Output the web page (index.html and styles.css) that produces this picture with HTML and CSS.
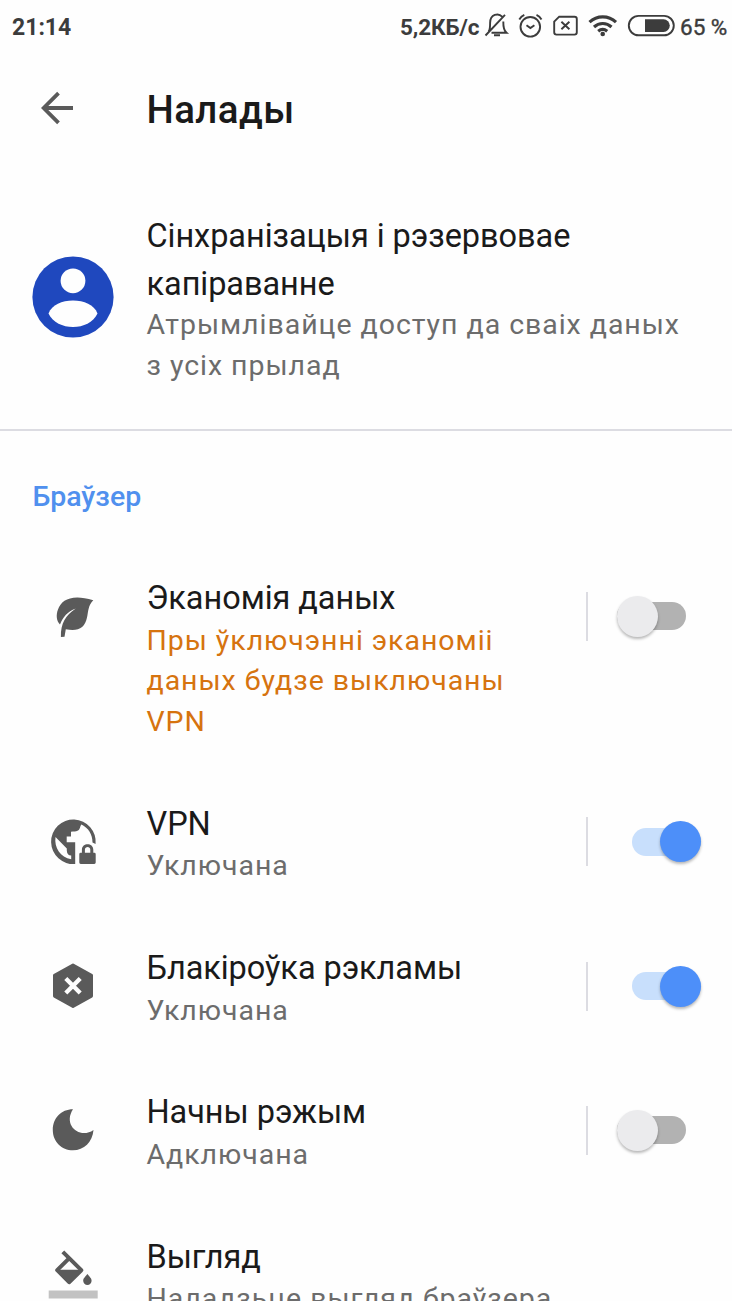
FILE: index.html
```html
<!DOCTYPE html>
<html lang="be">
<head>
<meta charset="utf-8">
<title>Налады</title>
<link rel="stylesheet" href="styles.css">
</head>
<body>
<div class="screen">
  <div class="status">
    <span class="clock">21:14</span>
    <span class="speed">5,2КБ/с</span>
    <svg class="tray" width="250" height="40" viewBox="482 6 250 40" fill="none" stroke="#3c3c3c" stroke-width="1.9">
      <path d="M485.500 35.500 505 14.800M488.500 31.500c1.700-1.700 1.600-4 1.600-8.500 0-9 8.500-10.300 12-6.300M503.300 21.500c-.1 6 .5 9 3.200 11.300H491.500M494 35.300h6"/>
      <circle cx="530.300" cy="26.800" r="9.800"/>
      <path d="M526.500 25.200l3.900 2.900 4-2.900M519.300 19.500c1.200-2.200 2.700-3.600 5-4.600M541.500 19.500c-1.200-2.200-2.700-3.600-5-4.600"/>
      <path d="M559.200 16.700h15.300q2.300 0 2.300 2.300v13.300q0 2.300-2.300 2.300h-18q-2.300 0-2.300-2.300V21.700zM561.400 21.700l8 7.600M569.400 21.700l-8 7.600"/>
      <g stroke-width="3.100"><path d="M589.500 22.200c7.500-7.100 19-7.100 26.500 0M594 27c5-4.600 12.500-4.600 17.500 0M598.200 31.300c2.700-2.300 6.300-2.300 9 0"/></g>
      <circle cx="602.700" cy="34" r="2.300" fill="#3c3c3c" stroke="none"/>
      <rect x="628.800" y="15.900" width="45" height="19.400" rx="9.700"/>
      <path d="M645 19.300h18.500a6.300 6.300 0 0 1 0 12.600H645z" fill="#3c3c3c" stroke="none"/>
    </svg>
    <span class="percent">65 %</span>
  </div>

  <header class="toolbar">
    <svg class="back" width="36" height="36" viewBox="0 0 36 36" fill="none" stroke="#5a5a5a" stroke-width="3.800"><path d="M34 18H4M19.500 3.200 4.700 18l14.800 14.800"/></svg>
    <h1 class="heading">Налады</h1>
  </header>

  <section class="account">
    <div class="lead">
      <svg width="82" height="82" viewBox="0 0 82 82"><circle cx="41" cy="41" r="40.600" fill="#1f48be"/><g fill="#fefefe"><circle cx="41" cy="24.800" r="12.400"/><path d="M16.500 57.500C20 48.500 30 44.500 41 44.500s21 4 24.500 13C61 66.500 51.500 71 41 71s-20-4.500-24.500-13.500z"/></g></svg>
    </div>
    <div class="text">
      <div class="title">Сінхранізацыя і рэзервовае<br>капіраванне</div>
      <div class="sub sub-account">Атрымлівайце доступ да сваіх даных<br>з усіх прылад</div>
    </div>
  </section>

  <h2 class="section">Браўзер</h2>

  <div class="row">
    <div class="icon"><svg width="50" height="50" viewBox="0 0 50 50" fill="#5a5a5a"><path d="M12 33.500C8.500 30 7.800 24 10 18.500 13.500 8.500 24 2.800 45.300 9.200 40 14.500 40.500 20 39 26.500 36.800 37 30 40.800 17.800 38.200L16.500 45.800l-3.600.3C12.600 32 17.500 25 27.700 17.600 19.500 20.800 15 26 12 33.500z"/></svg></div>
    <div class="text"><div class="title">Эканомія даных</div><div class="sub warn">Пры ўключэнні эканоміі<br>даных будзе выключаны<br>VPN</div></div>
    <div class="control"><i class="rule"></i><span class="switch off"></span></div>
  </div>

  <div class="row">
    <div class="icon"><svg width="50" height="50" viewBox="0 0 50 50"><path fill="#5a5a5a" fill-rule="evenodd" d="M27.200 47A22.300 22.300 0 1 1 47.600 27L44.500 25.500C44.500 17.500 40.500 11 33.500 7.500 32 8.500 32.500 12.500 29.500 13.800 28 14.700 25.500 14.500 23 14.700V19.500H18.700V25.300H27.200zM7.500 20C6 31 12.500 40 23.200 42.300V38.500C20.500 38.500 18.800 36.500 18.800 33.500V31.500z"/><path fill="#5a5a5a" fill-rule="evenodd" d="M32.700 35.800h1.200v-3c0-7.300 11.400-7.300 11.400 0v3h1q1.400 0 1.400 1.400v8.400q0 1.400-1.400 1.400H32.700q-1.400 0-1.400-1.400v-8.400q0-1.400 1.400-1.400zM36.900 35.800h5.400v-3c0-3.600-5.400-3.600-5.400 0z"/></svg></div>
    <div class="text"><div class="title">VPN</div><div class="sub">Уключана</div></div>
    <div class="control"><i class="rule"></i><span class="switch on"></span></div>
  </div>

  <div class="row">
    <div class="icon"><svg width="50" height="50" viewBox="0 0 50 50"><path d="M25 4 43.500 14.300v20.800L25 45.400 6.500 35.100V14.300z" fill="#5a5a5a" stroke="#5a5a5a" stroke-width="3" stroke-linejoin="round"/><path d="M17.800 17.600 32.200 32M32.200 17.600 17.800 32" stroke="#fefefe" stroke-width="4.300"/></svg></div>
    <div class="text"><div class="title">Блакіроўка рэкламы</div><div class="sub">Уключана</div></div>
    <div class="control"><i class="rule"></i><span class="switch on"></span></div>
  </div>

  <div class="row">
    <div class="icon"><svg width="50" height="50" viewBox="0 0 50 50" fill="#5a5a5a"><path d="M25 4.300C13 4.300 4.800 13.500 4.800 25c0 11.500 8.700 20.300 20.200 20.300 11 0 19.500-8.200 20.500-20.300C32 34.500 14.500 20.500 25 4.300z"/></svg></div>
    <div class="text"><div class="title">Начны рэжым</div><div class="sub">Адключана</div></div>
    <div class="control"><i class="rule"></i><span class="switch off"></span></div>
  </div>

  <div class="row">
    <div class="icon"><svg width="50" height="50" viewBox="0 0 50 50"><path d="M14.800 1.800 33.300 20.200 21.100 32.200 9.200 20.200 20.300 9.200" fill="none" stroke="#5a5a5a" stroke-width="4" stroke-linejoin="round"/><path d="M8 19.700h26.500L21.200 34zM39.400 24c3 3.500 4.200 4.700 4.200 6.700a4.200 4.200 0 0 1-8.400 0c0-2 1.200-3.200 4.200-6.700z" fill="#5a5a5a"/><path d="M0.700 40.500H49.700v8H0.700z" fill="#c2c2c2"/></svg></div>
    <div class="text"><div class="title">Выгляд</div><div class="sub">Наладзьце выгляд браўзера</div></div>
  </div>
</div>
</body>
</html>
```
FILE: styles.css
```css
* { box-sizing: border-box; }
body { margin: 0; background: #fefefe; font-family: Roboto, "Noto Sans", sans-serif; color: #1a1a1a; }
.screen { width: 732px; height: 1301px; overflow: hidden; display: flex; flex-direction: column; }

.status { display: flex; align-items: center; height: 52px; padding-left: 12px; flex: none; color: #3c3c3c; font-size: 23px; white-space: nowrap; }
.clock { width: 388px; padding-top: 2px; font-weight: 700; }
.speed { width: 82px; padding-top: 2px; font-size: 22.500px; font-weight: 700; letter-spacing: -0.1px; }
.tray { flex: none; width: 250px; }
.percent { margin-left: -52px; padding-top: 1px; font-size: 22.500px; -webkit-text-stroke: 0.4px #3c3c3c; }

.toolbar { display: flex; align-items: center; height: 112px; padding-left: 39px; flex: none; }
.back { flex: none; margin-right: 71.500px; }
.heading { margin: 4px 0 0; font-size: 38.500px; font-weight: 500; line-height: 48px; letter-spacing: 0.4px; }

.account { display: flex; height: 267px; padding-top: 46.500px; border-bottom: 2px solid #dcdce2; flex: none; }
.lead { width: 146.500px; height: 173px; padding-left: 32px; display: flex; align-items: center; flex: none; }

.text { flex: 1; padding-top: 1px; white-space: nowrap; }
.title { font-size: 32.500px; line-height: 48.800px; letter-spacing: -0.060px; }
.sub { margin-top: -2.200px; font-size: 28.500px; line-height: 40.700px; letter-spacing: 0.960px; color: #6c6c6c; }
.sub-account { margin-top: -4px; }
.warn { color: #d6730f; }

.section { height: 113.500px; margin: 0; padding: 45px 0 0 32.500px; font-size: 28.500px; font-weight: 500; line-height: 42px; color: #5090ee; flex: none; }

.row { display: flex; flex: none; padding: 28.500px 0 27.500px; }
.icon { width: 146.500px; height: 86px; padding-left: 48px; display: flex; align-items: center; flex: none; }
.control { display: flex; align-items: center; width: 146px; height: 86px; flex: none; }
.rule { width: 2px; height: 49px; margin-right: 29px; background: #dcdce2; }
.switch { display: flex; align-items: center; width: 69px; height: 28px; border-radius: 14px; }
.switch::before { content: ""; width: 41px; height: 41px; border-radius: 50%; flex: none; box-shadow: 0 2px 3px rgba(0, 0, 0, 0.28); }
.off { background: #b2b2b2; }
.off::before { background: #ebebed; }
.on { margin-left: 15px; background: #c8dffc; justify-content: flex-end; }
.on::before { background: #4d8ff9; }
```
